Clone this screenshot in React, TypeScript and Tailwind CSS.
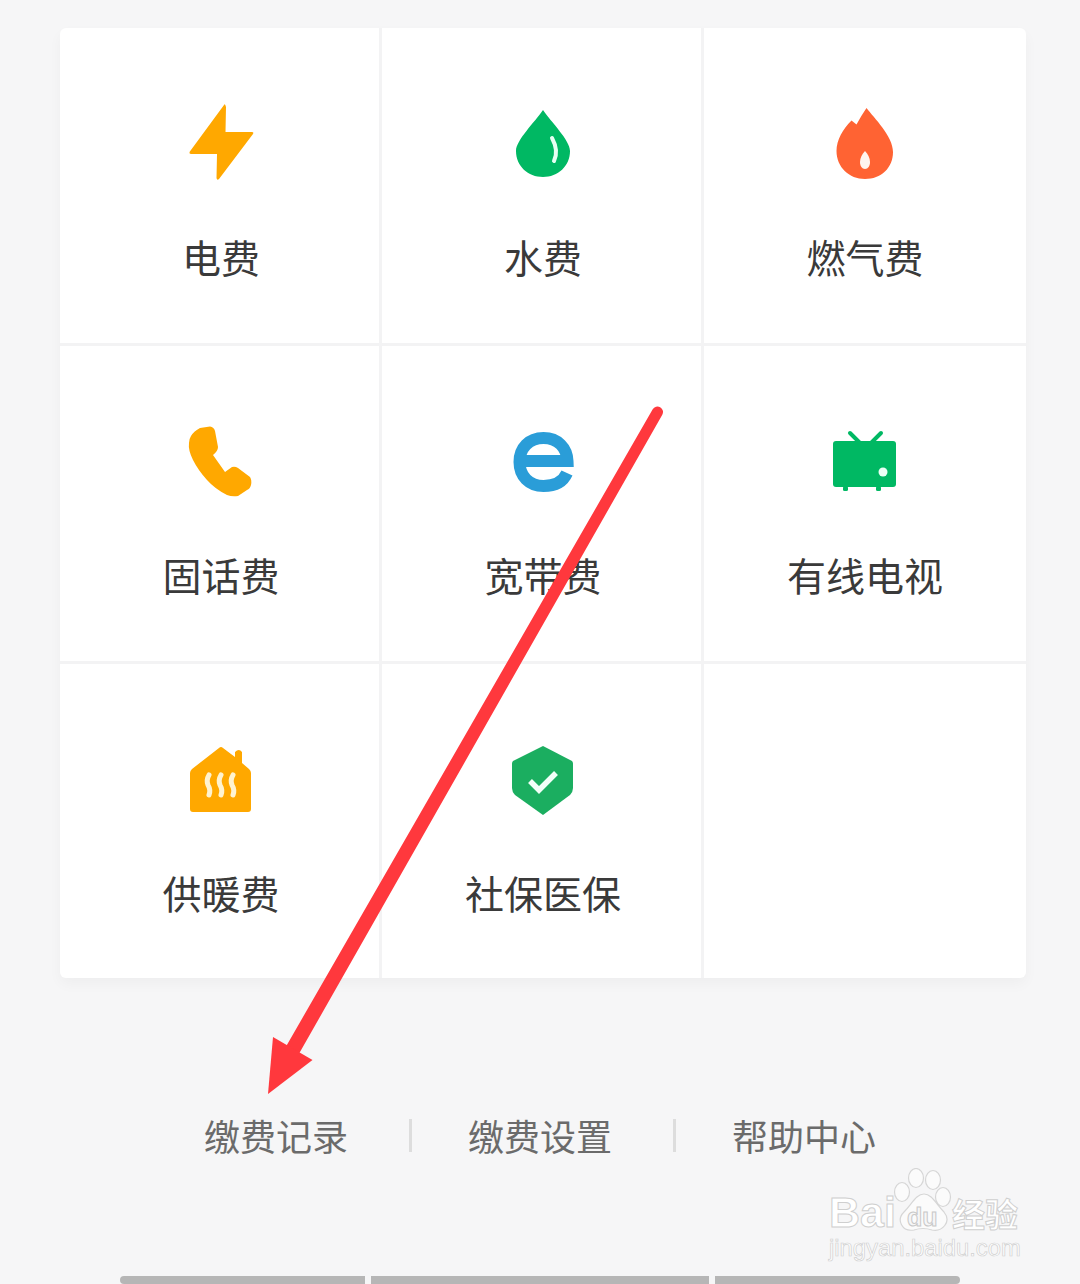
const Bolt = () => (
  <svg width="80" height="80" viewBox="180 103 80 80">
    <path d="M224 105 L189.500 152 Q189 154 191 154 L217 154 L216.500 178 Q217 181 219 179 L253 134 Q254 132 252 132 L225.500 132 L226 107 Q225 103 224 105Z" fill="#ffa800" />
  </svg>
);
const Drop = () => (
  <svg width="80" height="80" viewBox="502 103 80 80">
    <path d="M543 110 C535 122 516 140 516 151 C516 166 528 177 543 177 C558 177 570 166 570 151 C570 140 551 122 543 110Z" fill="#00b863" />
    <path d="M552 138 Q559 151 554 161" fill="none" stroke="#e6fff3" strokeWidth="4" strokeLinecap="round" />
  </svg>
);
const Flame = () => (
  <svg width="80" height="80" viewBox="825 103 80 80">
    <path d="M866.500 108 C874 118 893 136 893 152 C893 168 881 179 865 179 C849 179 836.500 167 836.500 151 C836.500 140 843 129 851.500 120.500 L856.500 124.500 Q861 116 866.500 108Z" fill="#ff6333" />
    <path d="M865 151 C868 154 870 158 870 162 C870 166 868 169 865 169 C862 169 860 166 860 162 C860 158 862 154 865 151Z" fill="#fff4ee" />
  </svg>
);
const Phone = () => (
  <svg width="80" height="80" viewBox="180 421 80 80">
    <path d="M191 436 Q194 431 200 428 L210 426.500 Q214 427 215 431 L218 447 Q218 451 213 455 L225 472 L232 467 Q235 466 238 468 L250 477 Q252 480 251 485 Q250 489 247 490 L238 496 Q232 497 227 495 Q215 489 207 480 Q198 470 193 460 Q188 450 189 443 Q189 439 191 436Z" fill="#ffa800" />
  </svg>
);
const EIcon = () => (
  <svg width="80" height="80" viewBox="502 421 80 80">
    <path d="M567 473 C563 482 554 486 543.500 486 C529 486 519.500 476 519.500 462 C519.500 448 529 438 543.500 438 C558 438 567 448 567.500 461 L519 461" fill="none" stroke="#2a9dd8" strokeWidth="12" />
  </svg>
);
const Tv = () => (
  <svg width="80" height="80" viewBox="825 421 80 80">
    <path d="M850 433 L861 444 M881 433 L870 444" stroke="#00b863" strokeWidth="4" strokeLinecap="round" />
    <rect x="833" y="441" width="63" height="46" rx="3" fill="#00b863" />
    <rect x="843" y="486" width="5" height="5" rx="1.500" fill="#00b863" />
    <rect x="876" y="486" width="5" height="5" rx="1.500" fill="#00b863" />
    <ellipse cx="883" cy="472" rx="4.500" ry="4.500" fill="#eafff5" />
  </svg>
);
const House = () => (
  <svg width="80" height="80" viewBox="180 739 80 80">
    <path d="M219 748 Q221 746 223 748 L235 757 L235 752 Q239 748 242 752 L242 763 L249 769 Q251 771 251 773 L251 809 Q251 812 248 812 L193 812 Q190 812 190 809 L190 773 Q190 771 192 769Z" fill="#ffa800" />
    <path d="M209 775 Q206 780 208 785 Q211 790 209 795 M221 775 Q218 780 220 785 Q223 790 221 795 M233 775 Q230 780 232 785 Q235 790 233 795" fill="none" stroke="#fff3d0" strokeWidth="5" strokeLinecap="round" />
  </svg>
);
const Shield = () => (
  <svg width="80" height="80" viewBox="502 739 80 80">
    <path d="M543 746 L572 761 Q573 762 573 764 L573 788 Q573 792 570 795 L543 815 L515 795 Q512 792 512 788 L512 764 Q512 762 513 761Z" fill="#1bae60" />
    <path d="M530 781 L539 790 L556 773" fill="none" stroke="#f2fff8" strokeWidth="5.500" />
  </svg>
);

const cells: { icon?: React.ReactNode; label?: string }[] = [
  { icon: <Bolt />, label: "电费" },
  { icon: <Drop />, label: "水费" },
  { icon: <Flame />, label: "燃气费" },
  { icon: <Phone />, label: "固话费" },
  { icon: <EIcon />, label: "宽带费" },
  { icon: <Tv />, label: "有线电视" },
  { icon: <House />, label: "供暖费" },
  { icon: <Shield />, label: "社保医保" },
  {},
];

const Arrow = () => (
  <svg className="absolute left-0 top-0" width="1080" height="1284" viewBox="0 0 1080 1284">
    <path d="M652.700 409.300 A5.500 5.500 0 0 1 662.300 414.700 L296 1059 L284 1050Z" fill="#ff383d" />
    <path d="M268 1094 L273 1037 L312.500 1060Z" fill="#ff383d" />
  </svg>
);

const Watermark = () => (
  <div className="absolute left-[826px] top-[1166px] w-[200px] h-[100px] font-['Liberation_Sans',sans-serif] text-white">
    <svg className="absolute left-[64px] top-[2px]" width="66" height="64" viewBox="0 0 66 64">
      <g fill="#fbfbfb" stroke="#d6d6d6" strokeWidth="1.200">
        <ellipse cx="12" cy="24" rx="7.500" ry="9.500" />
        <ellipse cx="26" cy="10" rx="7.500" ry="9.500" />
        <ellipse cx="43" cy="12" rx="7.500" ry="9.500" />
        <ellipse cx="53" cy="29" rx="7.500" ry="9.500" />
        <path d="M34 26 C42 26 46 36 54 44 C62 54 52 64 42 62 C36 60 30 60 24 62 C12 64 6 52 14 44 C22 36 26 26 34 26Z" />
      </g>
    </svg>
    <span className="absolute left-[3px] top-[23px] text-[43px] leading-[46px] font-bold [-webkit-text-stroke:1px_#cfcfcf]">Bai</span>
    <span className="absolute left-[81px] top-[38px] text-[25px] leading-[26px] font-bold text-[#f6f6f7] [-webkit-text-stroke:1px_#c8c8c8]">du</span>
    <span className="absolute left-[126px] top-[27px] text-[33px] leading-[40px] font-bold font-['Noto_Sans_CJK_SC',sans-serif] [-webkit-text-stroke:1px_#cfcfcf]">经验</span>
    <span className="absolute left-[3px] top-[69px] text-[23.800px] leading-[26px] [-webkit-text-stroke:0.7px_#d0d0d0]">jingyan.baidu.com</span>
  </div>
);

export default function App() {
  return (
    <div className="relative w-[1080px] h-[1284px] overflow-hidden bg-[#f6f6f7] font-['Noto_Sans_CJK_SC',sans-serif] pt-[28px] flex flex-col">
      <div className="ml-[60px] w-[966px] grid grid-cols-[319px_319px_322px] grid-rows-[315px_315px_314px] gap-[3px] rounded-[6px] overflow-hidden bg-[#f3f3f4] shadow-[0_6px_14px_rgba(0,0,0,0.035)]">
        {cells.map((c, i) => (
          <div key={i} className="bg-white flex flex-col items-center pt-[75px]">
            {c.icon}
            {c.label && (
              <div className={i % 3 < 2 ? "mt-[48px] ml-[3px] text-[39px] leading-[50px] text-[#3a3a3a]" : "mt-[48px] text-[39px] leading-[50px] text-[#3a3a3a]"}>
                {c.label}
              </div>
            )}
          </div>
        ))}
      </div>
      <div className="mt-[132px] pl-[204px] flex items-center text-[36px] leading-[50px] text-[#6b6b6b]">
        <span>缴费记录</span>
        <span className="ml-[61px] mr-[56px] w-[3px] h-[33px] bg-[#dddddd]" />
        <span>缴费设置</span>
        <span className="ml-[61px] mr-[56px] w-[3px] h-[33px] bg-[#dddddd]" />
        <span>帮助中心</span>
      </div>
      <div className="mt-auto pl-[120px] flex gap-[6px] h-[8px]">
        <div className="w-[245px] bg-[#b6b6b6] rounded-tl-[4px] rounded-bl-[4px]" />
        <div className="w-[338px] bg-[#b6b6b6]" />
        <div className="w-[245px] bg-[#b6b6b6] rounded-tr-[4px] rounded-br-[4px]" />
      </div>
      <Arrow />
      <Watermark />
    </div>
  );
}
